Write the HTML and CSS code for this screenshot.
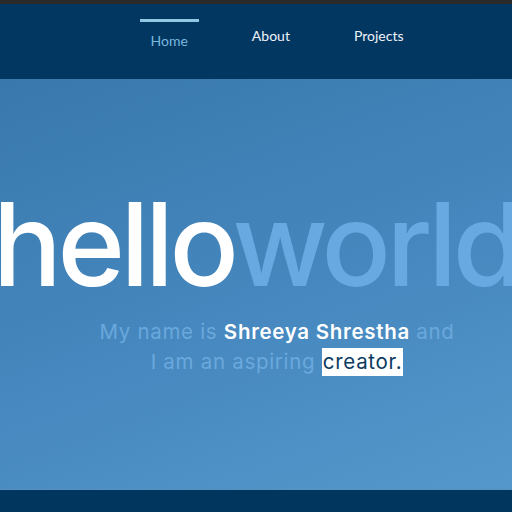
FILE: index.html
```html
<!DOCTYPE html>
<html>
<head>
<meta charset="utf-8">
<link rel="stylesheet" href="styles.css">
</head>
<body>
<div class="topstrip"></div>
<header class="nav">
  <nav class="links">
    <a class="link active" href="#">Home</a>
    <a class="link" href="#">About</a>
    <a class="link" href="#">Projects</a>
  </nav>
</header>
<main class="hero">
  <h1 class="big"><span class="hello">hello</span><span class="world">world</span></h1>
  <p class="intro">My name is <strong>Shreeya Shrestha</strong> and<br>I am an aspiring <mark>creator.</mark></p>
</main>
<footer class="foot"></footer>
</body>
</html>
```

FILE: styles.css
```css
* { box-sizing: border-box; }
html, body { margin: 0; padding: 0; }
body {
  width: 512px;
  height: 512px;
  overflow: hidden;
  background: #013762;
  font-family: Inter, "Noto Sans", sans-serif;
  display: flex;
  flex-direction: column;
}
.topstrip {
  height: 4px;
  background: #2b2b2b;
}
.nav {
  height: 75px;
  background: #023762;
  display: flex;
  justify-content: center;
  padding-left: 42px;
}
.links {
  display: flex;
  gap: 42px;
  align-items: flex-start;
}
.link {
  font-family: "Lato", "Open Sans", sans-serif;
  font-size: 14px;
  color: #eef3f8;
  text-decoration: none;
  padding: 23px 11px 0;
  line-height: 17px;
}
.link.active {
  margin-top: 15px;
  padding-top: 10px;
  border-top: 3px solid #8ec8e2;
  color: #7ab8de;
}
.hero {
  height: 411px;
  background: linear-gradient(160deg, #3878ac 0%, #4688bf 55%, #5498cb 100%);
  display: flex;
  flex-direction: column;
  align-items: center;
  overflow: hidden;
  border-bottom: 1px solid #5a90bd;
}
.big {
  margin: 108px 0 0;
  font-size: 115px;
  font-weight: 500;
  line-height: 115px;
  letter-spacing: -4.5px;
  white-space: nowrap;
}
.hello { color: #ffffff; }
.world { color: #67a9e0; }
.intro {
  margin: 15px 0 0 42px;
  text-align: center;
  font-size: 20.5px;
  letter-spacing: 0.7px;
  line-height: 30px;
  color: #6aa8dd;
}
.intro strong {
  color: #ffffff;
  font-weight: 600;
}
.intro mark {
  background: #ffffff;
  color: #0b3a60;
  padding: 1px 1px 2px;
}
.foot {
  flex: 1;
  background: #01365f;
}
```
